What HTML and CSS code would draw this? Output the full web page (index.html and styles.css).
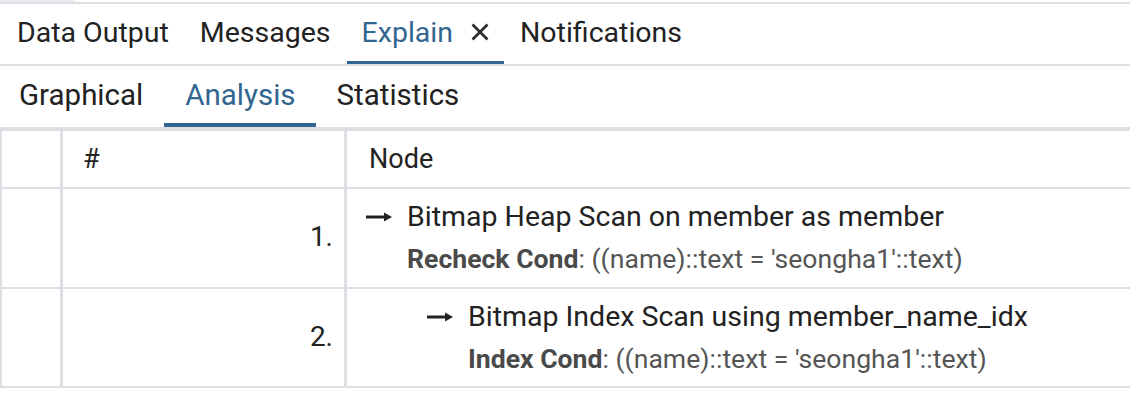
FILE: index.html
```html
<!DOCTYPE html>
<html>
<head>
<meta charset="utf-8">
<link rel="stylesheet" href="styles.css">
</head>
<body>
<div class="top-edge"><div class="top-edge-piece"></div></div>
<div class="tabbar main-tabs">
  <div class="tab">Data Output</div>
  <div class="tab">Messages</div>
  <div class="tab active">Explain
    <svg class="close" width="18" height="18" viewBox="0 0 18 18"><path d="M1.5 1.5 L16.5 16.5 M16.5 1.5 L1.5 16.5" stroke="#2a2a2a" stroke-width="2.6" fill="none"/></svg>
  </div>
  <div class="tab">Notifications</div>
</div>
<div class="tabbar sub-tabs">
  <div class="tab">Graphical</div>
  <div class="tab active">Analysis</div>
  <div class="tab">Statistics</div>
</div>
<div class="grid">
  <div class="cell"></div>
  <div class="cell head hash">#</div>
  <div class="cell head">Node</div>

  <div class="cell"></div>
  <div class="cell num">1.</div>
  <div class="cell node">
    <div class="node-line">
      <svg class="arrow" width="26" height="10" viewBox="0 0 26 10"><path d="M0 5 H20" stroke="#222" stroke-width="3"/><path d="M18 0.5 L26 5 L18 9.5 Z" fill="#222"/></svg>
      <div class="node-body">
        <div class="node-title">Bitmap Heap Scan on member as member</div>
        <div class="node-detail"><b>Recheck Cond</b>: ((name)::text = 'seongha1'::text)</div>
      </div>
    </div>
  </div>

  <div class="cell"></div>
  <div class="cell num">2.</div>
  <div class="cell node">
    <div class="node-line indent1">
      <svg class="arrow" width="26" height="10" viewBox="0 0 26 10"><path d="M0 5 H20" stroke="#222" stroke-width="3"/><path d="M18 0.5 L26 5 L18 9.5 Z" fill="#222"/></svg>
      <div class="node-body">
        <div class="node-title">Bitmap Index Scan using member_name_idx</div>
        <div class="node-detail"><b>Index Cond</b>: ((name)::text = 'seongha1'::text)</div>
      </div>
    </div>
  </div>
</div>
</body>
</html>
```

FILE: styles.css
```css
html, body {
  margin: 0;
  padding: 0;
  background: #ffffff;
}
body {
  font-family: Roboto, "Liberation Sans", sans-serif;
  color: #222222;
  width: 1130px;
  height: 410px;
  overflow: hidden;
}
.top-edge {
  height: 2px;
  background: #ffffff;
}
.top-edge-piece {
  width: 75px;
  height: 2px;
  background: #ececf0;
}
.tabbar {
  display: flex;
  align-items: stretch;
  border-bottom: 2px solid #dedee4;
}
.main-tabs {
  border-top: 2px solid #dedee4;
  height: 60px;
  padding-left: 2px;
}
.sub-tabs {
  height: 61px;
  padding-left: 0;
}
.tab {
  display: flex;
  align-items: center;
  padding: 0 15px 1px 15px;
  margin-right: 1px;
  font-size: 28.5px;
  border-bottom: 3px solid transparent;
  box-sizing: border-box;
}
.sub-tabs .tab {
  border-bottom-width: 4px;
  padding: 1px 20px 0 21px;
  margin-right: 0;
  font-size: 29.5px;
}
.sub-tabs .tab:first-child {
  padding-left: 19px;
  padding-right: 21px;
}
.tab.active {
  color: #326690;
  border-bottom-color: #326690;
}
.close {
  margin-left: 18px;
}
.grid {
  display: grid;
  grid-template-columns: 58px 281px 1fr;
  grid-template-rows: 56px 98px 97px;
  column-gap: 3px;
  row-gap: 2px;
  background: #dedee4;
  padding: 2px 0 2px 2px;
  width: 1128px;
}
.cell {
  background: #ffffff;
  display: flex;
  align-items: center;
  font-size: 27px;
}
.head {
  padding-left: 22px;
}
.head.hash {
  padding-left: 20px;
}
.num {
  justify-content: flex-end;
  padding-right: 11px;
  padding-bottom: 3px;
  font-size: 28px;
}
.node {
  padding-left: 19px;
}
.node-line {
  display: flex;
  align-items: flex-start;
}
.indent1 {
  margin-left: 61px;
}
.arrow {
  flex: none;
  margin-top: 12px;
  margin-right: 15px;
}
.node-title {
  font-size: 28.5px;
  line-height: 34px;
}
.node-detail {
  font-size: 26.6px;
  line-height: 34px;
  margin-top: 8px;
  color: #555555;
}
.node-detail b {
  color: #4a4a4a;
  font-weight: 700;
}
```
